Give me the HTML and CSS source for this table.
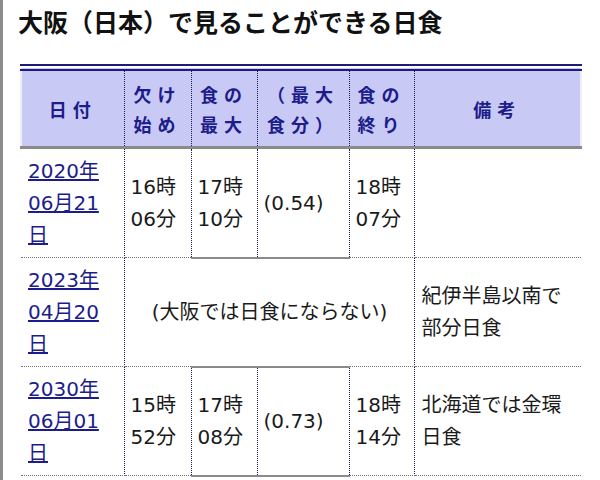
FILE: index.html
```html
<!DOCTYPE html>
<html lang="ja">
<head>
<meta charset="utf-8">
<title>大阪で見ることができる日食</title>
<link rel="stylesheet" href="styles.css">
</head>
<body>
<div class="page">
  <h1 class="title">大阪（日本）で見ることができる日食</h1>
  <table class="eclipse">
    <colgroup>
      <col class="c-date">
      <col class="c-start">
      <col class="c-max">
      <col class="c-mag">
      <col class="c-end">
      <col class="c-note">
    </colgroup>
    <thead>
      <tr>
        <th>日付</th>
        <th>欠け始め</th>
        <th class="hl">食の最大</th>
        <th class="hl">（最大食分）</th>
        <th>食の終り</th>
        <th>備考</th>
      </tr>
    </thead>
    <tbody>
      <tr>
        <td class="date"><a href="#">2020年06月21日</a></td>
        <td>16時<br>06分</td>
        <td class="hl">17時<br>10分</td>
        <td class="hl">(0.54)</td>
        <td>18時<br>07分</td>
        <td class="note"></td>
      </tr>
      <tr>
        <td class="date"><a href="#">2023年04月20日</a></td>
        <td class="none" colspan="4">(大阪では日食にならない)</td>
        <td class="note">紀伊半島以南で部分日食</td>
      </tr>
      <tr>
        <td class="date"><a href="#">2030年06月01日</a></td>
        <td>15時<br>52分</td>
        <td class="hl">17時<br>08分</td>
        <td class="hl">(0.73)</td>
        <td>18時<br>14分</td>
        <td class="note">北海道では金環日食</td>
      </tr>
    </tbody>
  </table>
</div>
</body>
</html>
```

FILE: styles.css
```css
html, body {
  margin: 0;
  padding: 0;
  background: #ffffff;
}

.page {
  border-left: 3px solid #8c8c8c;
  min-height: 480px;
  box-sizing: border-box;
  padding: 6px 0 0 15px;
  font-family: "DejaVu Sans", "Noto Sans CJK JP", sans-serif;
  color: #1a1a1a;
}

.title {
  margin: 0;
  font-family: "Noto Sans CJK JP", sans-serif;
  font-size: 25px;
  line-height: 30px;
  font-weight: bold;
  color: #111111;
}

.eclipse {
  margin: 28px 0 0 2px;
  width: 560px;
  border-collapse: collapse;
  table-layout: fixed;
}

.c-date { width: 103px; }
.c-start { width: 67px; }
.c-max { width: 66px; }
.c-mag { width: 92px; }
.c-end { width: 65px; }
.c-note { width: 167px; }

.eclipse th {
  background: #c9c9f6;
  color: #1c1c8a;
  font-family: "Noto Sans CJK JP", sans-serif;
  font-weight: bold;
  font-size: 18px;
  line-height: 30px;
  letter-spacing: 6px;
  text-align: center;
  vertical-align: middle;
  padding: 8px 3px 7px;
  border-top: 7px double #1c1c7e;
  border-bottom: 3px solid #8a8a8a;
  border-left: 1px dotted #1a1a50;
  border-right: 1px dotted #1a1a50;
}

.eclipse th:first-child {
  border-left: 2px solid #eeeef6;
}

.eclipse th:last-child {
  border-right: 2px solid #eeeef6;
}

.eclipse td {
  font-size: 20px;
  line-height: 32px;
  padding: 6px 5px 6px 6px;
  vertical-align: middle;
  text-align: left;
  border-left: 1px dotted #1a1a50;
  border-right: 1px dotted #1a1a50;
  border-bottom: 1px dotted #707070;
}

.eclipse td:first-child {
  border-left: none;
}

.eclipse td:last-child {
  border-right: none;
}

.eclipse td.date {
  padding-left: 7px;
  padding-right: 12px;
}

.eclipse td.hl {
  border-top: 2px solid #8a8a8a;
  border-bottom: 2px solid #8a8a8a;
}

.eclipse td.none {
  text-align: center;
}

.eclipse td.note {
  padding-left: 7px;
}

.date a {
  color: #1c1c8c;
  text-decoration: underline;
}
```
